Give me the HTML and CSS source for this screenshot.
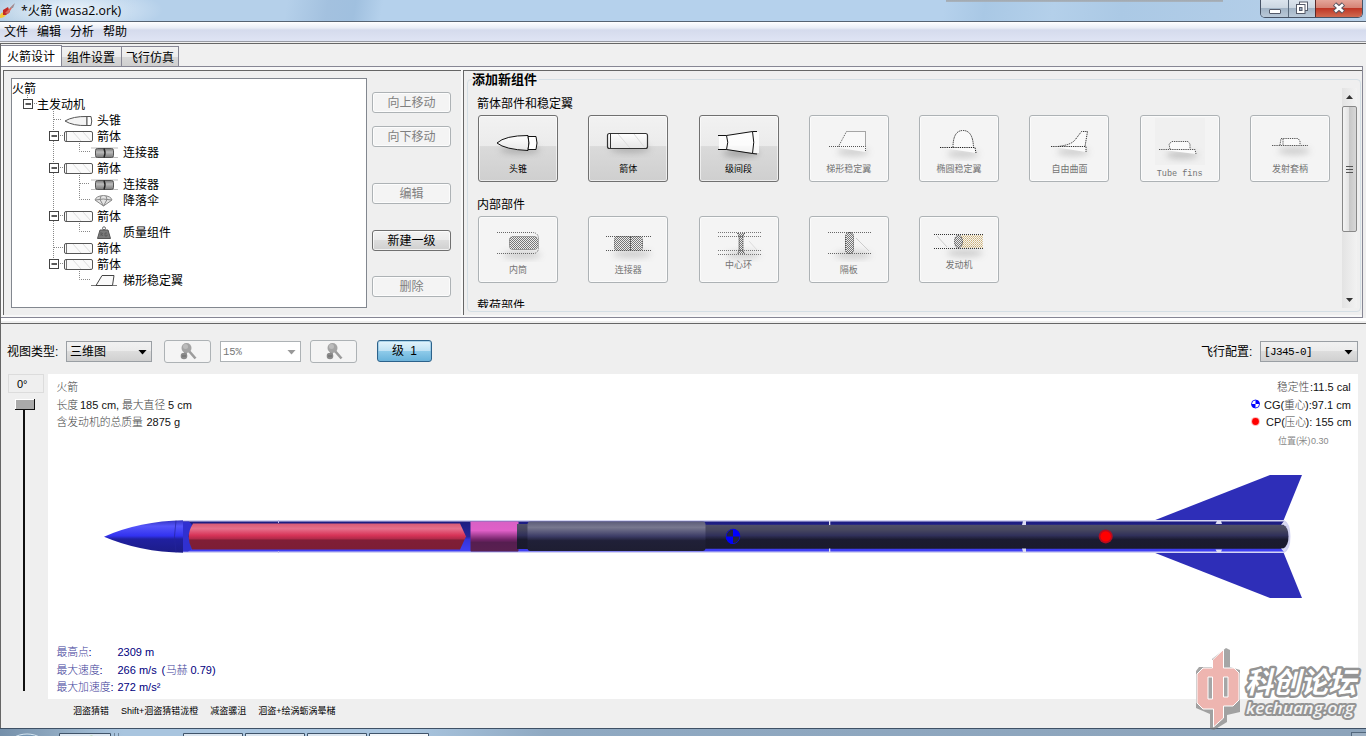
FILE: index.html
```html
<!DOCTYPE html>
<html lang="zh-CN">
<head>
<meta charset="utf-8">
<title>火箭 (wasa2.ork)</title>
<link rel="stylesheet" href="styles.css">
</head>
<body>
<svg width="0" height="0" class="defs">
  <defs>
    <linearGradient id="tubeFill" x1="0" y1="0" x2="0" y2="1"><stop offset="0" stop-color="#fff"/><stop offset="1" stop-color="#e6e6e6"/></linearGradient>
    <linearGradient id="coupFill" x1="0" y1="0" x2="0" y2="1"><stop offset="0" stop-color="#777"/><stop offset=".4" stop-color="#bbb"/><stop offset="1" stop-color="#777"/></linearGradient>
    <pattern id="check" width="2" height="2" patternUnits="userSpaceOnUse"><rect width="2" height="2" fill="#ececec"/><rect width="1" height="1" fill="#777"/><rect x="1" y="1" width="1" height="1" fill="#777"/></pattern>
    <pattern id="checkGold" width="2" height="2" patternUnits="userSpaceOnUse"><rect width="1" height="1" fill="#c09a50"/><rect x="1" y="1" width="1" height="1" fill="#d5b878"/></pattern>
    <filter id="soft" x="-30%" y="-60%" width="160%" height="220%"><feGaussianBlur stdDeviation="3"/></filter>
    <symbol id="t-nose" viewBox="0 0 30 16"><path d="M2 8Q10 3.2 24 3.5V12.500Q10 13 2 8Z" fill="#f4f4f4" stroke="#555"/><path d="M24 3.500H28Q29.500 8 28 12.500H24Z" fill="#fff" stroke="#555"/></symbol>
    <symbol id="t-tube" viewBox="0 0 30 16"><rect x="1.500" y="2.500" width="28" height="10" rx="1.500" fill="#fafafa" stroke="#555"/><path d="M3.500 3V12" stroke="#777"/><path d="M10 3L18 12M20 3L28 12" stroke="#ddd"/></symbol>
    <symbol id="t-coupler" viewBox="0 0 30 16"><path d="M2 3H29M2 12.500H29" stroke="#aaa" stroke-width=".8"/><rect x="6.500" y="3.500" width="18" height="9" rx="2" fill="url(#coupFill)" stroke="#555"/><path d="M15 3.500Q17 8 15 12.500" stroke="#222" fill="none" stroke-width="1.400"/></symbol>
    <symbol id="t-chute" viewBox="0 0 30 16"><path d="M6 7Q7 3 14.500 2.500Q22 3 23 7L14.500 13Z" fill="#e4e4e4" stroke="#888"/><path d="M6.500 7Q14 5 22.500 7M11 6.500L14.500 13L18 6.500M11 6.500L12 3M18 6.500L17 3" fill="none" stroke="#888"/></symbol>
    <symbol id="t-mass" viewBox="0 0 30 16"><circle cx="15" cy="3.300" r="1.500" fill="none" stroke="#666"/><path d="M11 5H19L21.500 13.500H8.500Z" fill="#7a7a7a" stroke="#555"/><path d="M12 7V11M12 9.500L14 8M12.500 9L14 11M18 8H16V11H18V9.500" fill="none" stroke="#555" stroke-width=".8"/></symbol>
    <symbol id="t-fin" viewBox="0 0 30 16"><path d="M2 12.500H28" stroke="#777"/><path d="M7 12.500L13 2.500H25L23.500 12.500Z" fill="#fafafa" stroke="#444"/></symbol>
    <symbol id="zoomer" viewBox="0 0 22 22"><path d="M12 10L18.500 17.500" stroke="#9c9c9c" stroke-width="2.600"/><circle cx="9.500" cy="7" r="5" fill="#a4a4a4"/><circle cx="8.500" cy="5.500" r="2.500" fill="#bcbcbc"/><path d="M7 11H10V14H7Z" fill="#a0a0a0"/><circle cx="7" cy="15" r="3.300" fill="#8a8a8a"/><path d="M5 15H9" stroke="#6c6c6c"/></symbol>
  </defs>
</svg>

<header class="titlebar">
  <svg class="appicon" width="17" height="20" viewBox="0 0 17 20"><path d="M0 18Q-1 13 4 12L6 15Q4 18 0 18Z" fill="#f3c93c"/><path d="M3 15L3 10L8 7L10 12L6 15Z" fill="#c22a25"/><path d="M5 13L14 4L12 8L8 14Z" fill="#d96a5e"/><path d="M10 8L15 3L13 8Z" fill="#9a8f96"/></svg>
  <h1 class="title">*火箭 (wasa2.ork)</h1>
  <div class="winbtns">
    <span class="wb wb-min"><svg width="14" height="14" viewBox="0 0 14 14"><rect x="1.500" y="4.500" width="11" height="4" rx=".5" fill="#fff" stroke="#555b6a"/></svg></span>
    <span class="wb wb-max"><svg width="14" height="14" viewBox="0 0 14 14"><rect x="4.500" y="1" width="8" height="8.500" fill="#fff" stroke="#555b6a"/><rect x="1.500" y="3.500" width="8.500" height="9" fill="#fff" stroke="#555b6a"/><rect x="4.500" y="6.500" width="2.500" height="3" fill="#9eb0c4" stroke="#555b6a"/></svg></span>
    <span class="wb wb-close"><svg width="14" height="14" viewBox="0 0 14 14"><path d="M2.500 3L11.500 11M11.500 3L2.500 11" stroke="#5a5560" stroke-width="4.800"/><path d="M3 3.500L11 10.500M11 3.500L3 10.500" stroke="#fff" stroke-width="2.600"/></svg></span>
  </div>
</header>
<nav class="menubar"><span>文件</span><span>编辑</span><span>分析</span><span>帮助</span></nav>

<main class="frame">
  <div class="tabs"><span class="tab tab-on">火箭设计</span><span class="tab">组件设置</span><span class="tab">飞行仿真</span></div>
  <div class="upper">
    <section class="pane pane-tree">
      <div class="tree">
        <svg class="lines" width="180" height="228" viewBox="12 79 180 228">
          <g fill="none" stroke="#888" stroke-dasharray="1 1">
            <path d="M27.500 95V99M34 103.500H37M53.500 111V263.500M54 119.500H62M60 135.500H63M60 167.500H63M60 215.500H63M54 247.500H63M60 263.500H63M79.500 143V151.500H90M79.500 175V199.500H90M80 183.500H90M79.500 223V231.500H90M79.500 271V279.500H90"/>
          </g>
          <g fill="#fff" stroke="#444"><rect x="23.500" y="99.500" width="9" height="9"/><rect x="49.500" y="131.500" width="9" height="9"/><rect x="49.500" y="163.500" width="9" height="9"/><rect x="49.500" y="211.500" width="9" height="9"/><rect x="49.500" y="259.500" width="9" height="9"/></g>
          <path d="M25.500 104H31M51.500 136H57M51.500 168H57M51.500 216H57M51.500 264H57" stroke="#222" stroke-width="1.600"/>
        </svg>
        <ul class="rows">
          <li>火箭</li>
          <li class="d1">主发动机</li>
          <li class="d2"><svg><use href="#t-nose"/></svg>头锥</li>
          <li class="d2"><svg><use href="#t-tube"/></svg>箭体</li>
          <li class="d3"><svg><use href="#t-coupler"/></svg>连接器</li>
          <li class="d2"><svg><use href="#t-tube"/></svg>箭体</li>
          <li class="d3"><svg><use href="#t-coupler"/></svg>连接器</li>
          <li class="d3"><svg><use href="#t-chute"/></svg>降落伞</li>
          <li class="d2"><svg><use href="#t-tube"/></svg>箭体</li>
          <li class="d3"><svg><use href="#t-mass"/></svg>质量组件</li>
          <li class="d2"><svg><use href="#t-tube"/></svg>箭体</li>
          <li class="d2"><svg><use href="#t-tube"/></svg>箭体</li>
          <li class="d3"><svg><use href="#t-fin"/></svg>梯形稳定翼</li>
        </ul>
      </div>
      <div class="actions">
        <button class="btn off">向上移动</button>
        <button class="btn off">向下移动</button>
        <button class="btn off gap-l">编辑</button>
        <button class="btn gap-m">新建一级</button>
        <button class="btn off gap-n">删除</button>
      </div>
    </section>

    <section class="pane pane-add">
      <fieldset class="group">
        <legend>添加新组件</legend>
        <div class="scroller">
          <div class="catalog">
            <h2>箭体部件和稳定翼</h2>
            <div class="cards">
              <button class="card"><svg viewBox="0 0 80 46"><ellipse cx="42" cy="35" rx="20" ry="4" fill="#888" opacity=".5" filter="url(#soft)"/><path d="M19 28Q27 20.500 50 20.500Q52 27 50 35.500Q27 34.500 19 28Z" fill="url(#tubeFill)" stroke="#111"/><path d="M50 21.500H58Q60 28 58 34.500H50Q52 28 50 21.500Z" fill="#fff" stroke="#111"/></svg><span>头锥</span></button>
              <button class="card"><svg viewBox="0 0 80 46"><ellipse cx="42" cy="34" rx="20" ry="4" fill="#888" opacity=".5" filter="url(#soft)"/><rect x="19.500" y="18.500" width="40" height="15" rx="2" fill="url(#tubeFill)" stroke="#333" stroke-width="1.200"/><path d="M22.500 19V33" stroke="#333"/><path d="M30 19L42 33M46 19L57 33" stroke="#ddd"/></svg><span>箭体</span></button>
              <button class="card"><svg viewBox="0 0 80 46"><ellipse cx="42" cy="38" rx="18" ry="4" fill="#777" opacity=".55" filter="url(#soft)"/><path d="M20 20.500H27.500L53.500 16.500L60 17V38L53.500 38L27.500 34.500H20Z" fill="#fff" opacity=".85"/><path d="M19 20.500H27.500L53.500 16.500H58M58 39L53.500 38.500L27.500 34.500H19M27.500 20.500Q30 27 27.500 34.500M53.500 16.500Q56 27 53.500 38.500" fill="none" stroke="#111"/></svg><span>级间段</span></button>
              <button class="card off"><svg viewBox="0 0 80 46"><ellipse cx="44" cy="37" rx="16" ry="4" fill="#999" opacity=".4" filter="url(#soft)"/><g fill="#f8f8f8" stroke="#555" stroke-dasharray="1 1"><path d="M29.500 31.500L37.500 16.500H56.500V31.500M20 31.500H56.500V37"/></g></svg><span>梯形稳定翼</span></button>
              <button class="card off"><svg viewBox="0 0 80 46"><ellipse cx="44" cy="39" rx="16" ry="4" fill="#999" opacity=".4" filter="url(#soft)"/><g fill="#fafafa" stroke="#222" stroke-dasharray="1.300 .9"><path d="M34 32.500Q34 15.500 44 15.500Q54 15.500 54.500 32.500M21 32.500H56L57 38"/></g></svg><span>椭圆稳定翼</span></button>
              <button class="card off"><svg viewBox="0 0 80 46"><ellipse cx="44" cy="37" rx="16" ry="4" fill="#999" opacity=".4" filter="url(#soft)"/><g fill="#fafafa" stroke="#333" stroke-dasharray="1.300 .9"><path d="M29 31.500Q42 30 46 25L52.500 16.500H58.500L56 31.500M22 31.500H57V37"/></g></svg><span>自由曲面</span></button>
              <button class="card off low"><svg viewBox="0 0 80 50"><rect x="15" y="3" width="50" height="47" fill="#f0f0f0"/><ellipse cx="42" cy="40" rx="16" ry="4" fill="#999" opacity=".5" filter="url(#soft)"/><g fill="#fafafa" stroke="#555" stroke-dasharray="1.300 .9"><path d="M30 34L29 29L32 26.500H48L50 29V34M19 34.500H55L56 39"/></g></svg><span class="mono">Tube fins</span></button>
              <button class="card off"><svg viewBox="0 0 80 46"><ellipse cx="44" cy="36" rx="16" ry="4" fill="#999" opacity=".4" filter="url(#soft)"/><g fill="#fafafa" stroke="#555" stroke-dasharray="1.300 .9"><path d="M30 30L31 23.500H48L50 26V30M33 24V30M22 30.500H58"/></g></svg><span>发射套柄</span></button>
            </div>
            <h2>内部部件</h2>
            <div class="cards">
              <button class="card off"><svg viewBox="0 0 80 46"><ellipse cx="44" cy="39" rx="19" ry="4" fill="#999" opacity=".4" filter="url(#soft)"/><rect x="31.500" y="20.500" width="28" height="13" rx="3" fill="url(#check)"/><g fill="none" stroke="#666" stroke-dasharray="1 1"><path d="M19 16.500H55Q60 17 60.500 22V32Q60 37 56 37.500H19"/><rect x="31.500" y="20.500" width="28" height="13" rx="3"/></g></svg><span>内筒</span></button>
              <button class="card off"><svg viewBox="0 0 80 46"><ellipse cx="44" cy="38" rx="19" ry="4" fill="#999" opacity=".4" filter="url(#soft)"/><rect x="26.500" y="20.500" width="28" height="14" rx="3" fill="url(#check)"/><g fill="none" stroke="#555" stroke-dasharray="1 1"><path d="M18 20.500H64M18 34.500H64M42.500 21V34"/><rect x="26.500" y="20.500" width="28" height="14" rx="3"/></g></svg><span>连接器</span></button>
              <button class="card off high"><svg viewBox="0 0 80 46"><ellipse cx="44" cy="39" rx="17" ry="4" fill="#999" opacity=".35" filter="url(#soft)"/><path d="M38 17H46L44 20V35L46 38H38L40 35V20Z" fill="url(#check)"/><g fill="none" stroke="#777" stroke-dasharray="1 1"><path d="M19 16.500H62M19 20.500H62M19 34.500H62M19 38.500H62"/><path d="M38.500 17L40 20V35L38.500 38M45.500 17L44 20V35L45.500 38" stroke="#333"/></g><path d="M50 25L58 34" stroke="#ddd"/></svg><span>中心环</span></button>
              <button class="card off"><svg viewBox="0 0 80 46"><ellipse cx="44" cy="39" rx="18" ry="4" fill="#999" opacity=".4" filter="url(#soft)"/><rect x="36.500" y="16.500" width="8" height="21" rx="3.500" fill="url(#check)" stroke="#444" stroke-dasharray="1 1"/><path d="M19 16.500H62M19 37.500H62" stroke="#666" stroke-dasharray="1 1"/><path d="M47 22L60 35" stroke="#ccc"/></svg><span>隔板</span></button>
              <button class="card off high"><svg viewBox="0 0 80 46"><ellipse cx="46" cy="37" rx="18" ry="4" fill="#999" opacity=".4" filter="url(#soft)"/><rect x="42" y="19" width="22" height="13" fill="url(#checkGold)" opacity=".75"/><ellipse cx="39.500" cy="25.500" rx="4" ry="6.500" fill="url(#check)" stroke="#333" stroke-dasharray="1 1"/><path d="M15 18.500H64M15 32.500H64" stroke="#333" stroke-dasharray="1 1"/><path d="M18 20L28 31" stroke="#ccc"/></svg><span>发动机</span></button>
            </div>
            <h2>载荷部件</h2>
          </div>
          <div class="scrollbar"><i class="arrow up"></i><i class="thumb"></i><i class="arrow down"></i></div>
        </div>
      </fieldset>
    </section>
  </div>

  <section class="lower">
    <div class="toolbar">
      <label class="lbl1">视图类型:</label>
      <span class="select s1"><b>三维图</b><i></i></span>
      <button class="tool"><svg width="22" height="22"><use href="#zoomer"/></svg></button>
      <span class="select s2"><b>15%</b><i></i></span>
      <button class="tool"><svg width="22" height="22"><use href="#zoomer"/></svg></button>
      <button class="stage">级 1</button>
      <label class="lbl2">飞行配置:</label>
      <span class="select s3"><b>[J345-0]</b><i></i></span>
    </div>
    <div class="work">
      <div class="roll"><span class="deg">0°</span><i class="knob"></i><i class="rail"></i></div>
      <svg class="view" width="1310" height="325" viewBox="48 374 1310 325">
        <defs>
          <linearGradient id="gNose" x1="0" y1="0" x2="0" y2="1"><stop offset="0" stop-color="#3434c0"/><stop offset=".18" stop-color="#5555fa"/><stop offset=".48" stop-color="#3232f0"/><stop offset=".58" stop-color="#2020a0"/><stop offset="1" stop-color="#1c1c88"/></linearGradient>
          <linearGradient id="gRed" x1="0" y1="0" x2="0" y2="1"><stop offset="0" stop-color="#d85a74"/><stop offset=".2" stop-color="#e6708c"/><stop offset=".45" stop-color="#d83458"/><stop offset=".58" stop-color="#b42a4a"/><stop offset=".64" stop-color="#801e36"/><stop offset="1" stop-color="#7c1e34"/></linearGradient>
          <linearGradient id="gPink" x1="0" y1="0" x2="0" y2="1"><stop offset="0" stop-color="#d860c4"/><stop offset=".3" stop-color="#e060c8"/><stop offset=".6" stop-color="#74246a"/><stop offset=".7" stop-color="#561e50"/><stop offset="1" stop-color="#5a2050"/></linearGradient>
          <linearGradient id="gGray" x1="0" y1="0" x2="0" y2="1"><stop offset="0" stop-color="#5c5c78"/><stop offset=".2" stop-color="#78788f"/><stop offset=".5" stop-color="#3c3c66"/><stop offset=".65" stop-color="#202038"/><stop offset="1" stop-color="#1e1e32"/></linearGradient>
          <linearGradient id="gDark" x1="0" y1="0" x2="0" y2="1"><stop offset="0" stop-color="#505068"/><stop offset=".2" stop-color="#48485f"/><stop offset=".45" stop-color="#30305a"/><stop offset=".62" stop-color="#1b1b30"/><stop offset="1" stop-color="#1a1a2c"/></linearGradient>
          <linearGradient id="gBack" x1="0" y1="0" x2="0" y2="1"><stop offset="0" stop-color="#1d1d80"/><stop offset=".5" stop-color="#26269a"/><stop offset=".6" stop-color="#3434d8"/><stop offset="1" stop-color="#4040f4"/></linearGradient>
        </defs>
        <rect x="48" y="374" width="1310" height="325" fill="#fff"/>
        <g fill="#2e2eb8"><path d="M1154 520.500L1270 475H1302L1283.500 520.500Z"/><path d="M1154 552.500L1270 598H1302L1283.500 552.500Z"/></g>
        <path d="M183 520H1284Q1290.500 523 1290.500 536.500T1284 553H183Z" fill="#d4d4f2"/>
        <rect x="183" y="521.500" width="1101" height="30" fill="url(#gBack)"/>
        <path d="M104 536.700Q140 521 183 520.300V552.700Q140 552 104 536.700Z" fill="url(#gNose)"/>
        <path d="M176 520.600Q173 536 176 552.400" fill="none" stroke="#24249c" stroke-width=".7"/>
        <path d="M183 521.500H189L192 525L188 536.500L192 549L188 551.500H183Z" fill="#3030d0"/>
        <path d="M193 523.500H460L466 536.500L460 549.500H192Q185 536 193 523.500Z" fill="url(#gRed)"/>
        <path d="M278.500 520V523M278.500 551V553" stroke="#b8b8e8"/>
        <rect x="470.500" y="521.500" width="48" height="30" rx=".8" fill="url(#gPink)"/>
        <rect x="517" y="524" width="13" height="25" fill="url(#gDark)"/>
        <path d="M704 524.700H1283Q1288.500 527 1288.500 536.500T1283 548.700H704Z" fill="url(#gDark)"/>
        <rect x="527.500" y="521.500" width="178" height="29.500" rx="3" fill="url(#gGray)"/>
        <g fill="#dcdcf2"><path d="M829 521H830.300V525H829ZM829 548.500H830.300V552H829ZM1023 521H1026V525H1022ZM1022 548.500H1026V552H1023ZM1217 521H1221L1222 524H1215.500ZM1215.500 549.500H1222L1221 552H1217ZM1281 524.700L1284 521L1287 525ZM1281 548.500L1284 552L1287 548Z"/></g>
        <g><ellipse cx="733" cy="536.400" rx="6.800" ry="7.200" fill="#22223e" stroke="#1010c8"/><path d="M733 536.400V529A7 7 0 0 1 740 536.400ZM733 536.400V544A7 7 0 0 1 726 536.400Z" fill="#00f"/></g>
        <circle cx="1105.700" cy="536.400" r="7" fill="#b50d20"/><circle cx="1105.700" cy="536.400" r="5.200" fill="#f00"/>
        <g class="info">
          <text y="391"><tspan class="cj" x="56.500">火箭</tspan></text>
          <text y="409"><tspan class="cj" x="56.500">长度</tspan><tspan x="80">185 cm,</tspan><tspan class="cj" x="122">最大直径</tspan><tspan x="168">5 cm</tspan></text>
          <text y="426"><tspan class="cj" x="56.500">含发动机的总质量</tspan><tspan x="146.500">2875 g</tspan></text>
          <text y="391"><tspan class="cj" x="1277">稳定性</tspan><tspan x="1310">:11.5 cal</tspan></text>
          <text y="409"><tspan x="1264">CG(</tspan><tspan class="cj" x="1284">重心</tspan><tspan x="1305">):97.1 cm</tspan></text>
          <text y="426"><tspan x="1266">CP(</tspan><tspan class="cj" x="1284.500">压心</tspan><tspan x="1305.500">): 155 cm</tspan></text>
          <text y="444" class="tiny"><tspan x="1278">位置(</tspan><tspan x="1298.500">米)</tspan><tspan x="1311">0.30</tspan></text>
        </g>
        <g><circle cx="1255.500" cy="404" r="4" fill="#fff" stroke="#22f"/><path d="M1255.500 404V400A4 4 0 0 1 1259.500 404ZM1255.500 404V408A4 4 0 0 1 1251.500 404Z" fill="#00f"/><circle cx="1255.500" cy="421.500" r="4.500" fill="#fbb"/><circle cx="1255.500" cy="421.500" r="3.400" fill="#f00"/></g>
        <g class="info blue">
          <text y="656"><tspan class="cj" x="56.500">最高点</tspan><tspan x="88.500">:</tspan><tspan x="117.500">2309 m</tspan></text>
          <text y="674"><tspan class="cj" x="56.500">最大速度</tspan><tspan x="99.500">:</tspan><tspan x="117.500">266 m/s</tspan><tspan x="161.500">(</tspan><tspan class="cj" x="166">马赫</tspan><tspan x="190.500">0.79)</tspan></text>
          <text y="691"><tspan class="cj" x="56.500">最大加速度</tspan><tspan x="110.500">:</tspan><tspan x="117.500">272 m/s²</tspan></text>
        </g>
      </svg>
    </div>
    <div class="hints"><span>洄盗猜错</span><span>Shift+洄盗猜错泷橙</span><span>减盗骡沮</span><span>洄盗+绘涡蛎涡晕槠</span></div>
  </section>
</main>

<footer class="taskbar">
  <svg width="1366" height="8" viewBox="0 728 1366 8">
    <ellipse cx="27" cy="744" rx="20" ry="14" fill="#7596b4" stroke="#d7e7f2"/>
    <g fill="#dbe5ef" stroke="#40546a"><path d="M59.500 740V729.500H110.500V740M183.500 740V729.500H242.500V740M245.500 740V729.500H304.500V740M307.500 740V729.500H366.500V740"/><path d="M369.500 740V729.500H428.500V740" fill="#f4f7fa"/></g>
    <path d="M114.500 729V736M118.500 729V736" stroke="#70869c"/>
    <path d="M76 737Q83 731 90 736M86 735Q92 730 97 736" fill="none" stroke="#79c142" stroke-width="2"/>
    <ellipse cx="151" cy="738" rx="9" ry="4" fill="#dc5a48"/>
    <path d="M203 736Q209 731 217 736Z" fill="#f38b22"/><path d="M215 734H220L223 736" stroke="#d63ce0" stroke-width="3" fill="none"/>
    <rect x="261" y="734" width="28" height="3" fill="#3a66b8"/><rect x="323" y="735" width="15" height="2" fill="#c8ac5c"/>
    <path d="M394 736L396 732L398 736Z" fill="#d88"/>
    <text x="1299" y="744" font-family="Open Sans" font-size="12" fill="#fff">14:55</text>
    <rect x="1351.500" y="728.500" width="15" height="9" fill="#9db0c3" stroke="#53687d"/>
  </svg>
</footer>

<svg class="watermark" width="172" height="90" viewBox="1194 646 172 90">
  <path d="M1199 667H1212V659L1226 648L1230 650V667L1240 670V712L1227 715V722L1214 730L1210 729V714L1196 708V671Z" fill="#777" opacity=".65"/>
  <path fill-rule="evenodd" d="M1203 668H1212.500V660L1223.500 649.500V668H1234L1239 673V700L1233 706H1223.500V718L1213.500 727V709H1203L1197 703V674ZM1208 677V699H1212.500V677ZM1223.500 677V697H1228V677Z" fill="#eeb5b0" stroke="#fff"/>
  <g stroke-linejoin="round" paint-order="stroke">
    <text class="wm-cn" x="1245" y="693" textLength="111" lengthAdjust="spacingAndGlyphs">科创论坛</text>
    <text class="wm-en" x="1246" y="714" textLength="108" lengthAdjust="spacingAndGlyphs">kechuang.org</text>
  </g>
</svg>
</body>
</html>
```
FILE: styles.css
```css
* { box-sizing: border-box; }
body {
  margin: 0;
  width: 1366px;
  height: 736px;
  overflow: hidden;
  position: relative;
  display: flex;
  flex-direction: column;
  background: #efefef;
  color: #000;
  font: 12px/16px "Liberation Sans", "Noto Sans CJK SC", sans-serif;
}
.defs { position: absolute; }
button { font: inherit; padding: 0; margin: 0; color: inherit; }
h1, h2 { margin: 0; font: inherit; }

/* window chrome */
.titlebar {
  height: 22px;
  flex: none;
  display: flex;
  border-bottom: 1px solid #566372;
  background:
    linear-gradient(#a2a9b0, #a9b4bf) 946px 0 / 277px 2px no-repeat,
    radial-gradient(ellipse 95px 24px at 68px 10px, rgba(240,247,253,.95), rgba(240,247,253,0)),
    linear-gradient(100deg, #a9c6df 0, #b5d0ea 10%, #b5d0ea 21%, #a3c1df 24%, #a0c0df 26%, #b5d1ec 28%, #b5d1ec 69%, #a9c8e5 72%, #b4d0ea 77%, #abc9e5 82%, #b8d1ea 100%);
}
.appicon { margin-right: 4px; }
.title { font: 12.3px/22px "Open Sans", "Noto Sans CJK SC", sans-serif; flex: 1; }
.winbtns {
  display: flex;
  height: 18px;
  margin-right: 3px;
  border: 1px solid #475366;
  border-top: 0;
  border-radius: 0 0 5px 5px;
  overflow: hidden;
}
.wb { display: flex; justify-content: center; align-items: center; background: linear-gradient(#dbe4ed, #ccd7e2 45%, #a2b4c6 50%, #bac9d8); }
.wb-min { width: 28px; border-right: 1px solid #5a6a7c; padding-top: 6px; }
.wb-max { width: 27px; border-right: 1px solid #5a2a2a; padding-bottom: 2px; }
.wb-close { width: 46px; padding-bottom: 2px; background: linear-gradient(#e4a69a, #d68476 45%, #bf3726 50%, #d06a50); }
.menubar {
  height: 20px;
  flex: none;
  display: flex;
  gap: 9px;
  padding: 1px 4px 0;
  line-height: 19px;
  background: linear-gradient(#fff, #e9edf6 6px, #d5dbed 8px, #dfe4f4);
  border-bottom: 1px solid #9a9da6;
}

/* tabs and panes */
.frame { flex: 1; min-height: 0; margin-top: 1px; border-top: 1px solid #666; border-left: 1px solid #666; display: flex; flex-direction: column; }
.tabs { height: 22px; flex: none; display: flex; align-items: flex-end; background: #f0f0f0; }
.tab {
  height: 20px;
  width: 57px;
  border: 1px solid #868694;
  border-left: 0;
  border-bottom: 0;
  padding-left: 4px;
  line-height: 23px;
  background: linear-gradient(#f2f2f2, #ececec 50%, #d8d8d8 51%, #cfcfcf);
  white-space: nowrap;
}
.tab:nth-child(2) { width: 60px; padding-left: 5px; }
.tab-on { width: 61px; height: 21px; padding-left: 6px; background: #fff; line-height: 22px; }
.upper {
  height: 252px;
  flex: none;
  display: flex;
  gap: 2px;
  padding: 3px 0 2px 2px;
  background: #f8f8f8;
  border: solid #868694;
  border-width: 1px 1px 1px 0;
  margin-right: 3px;
}
.pane { border: solid #666; border-width: 1px 0 0 1px; background: #efefef; height: 245px; }
.pane-tree { width: 458px; display: flex; padding: 7px 8px 0 7px; gap: 5px; }
.tree { width: 356px; height: 230px; border: 1px solid #82878f; background: #fff; display: grid; align-content: start; }
.lines, .rows { grid-area: 1 / 1; }
.rows { list-style: none; margin: 0; padding: 2px 0 0; }
.rows li { height: 16px; display: flex; align-items: center; white-space: nowrap; }
.rows svg { width: 30px; height: 16px; margin: 0 4px 1px 0; }
.d1 { padding-left: 25px; }
.d2 { padding-left: 51px; }
.d3 { padding-left: 77px; }
.actions { width: 79px; padding-top: 14px; display: flex; flex-direction: column; gap: 13px; }
.btn {
  height: 21px;
  border: 1px solid #707070;
  border-radius: 3px;
  background: linear-gradient(#f3f3f3, #ebebeb 48%, #dddddd 50%, #cfcfcf);
  line-height: 20px;
  box-shadow: inset 0 0 0 1px rgba(255,255,255,.7);
}
.btn.off { color: #808080; border-color: #adb2b5; background: #f4f4f4; }
.gap-l { margin-top: 23px; }
.gap-m { margin-top: 13px; }
.gap-n { margin-top: 12px; }

/* component catalogue */
.pane-add { flex: 1; min-width: 0; padding: 0 1px 1px 3px; }
.group { margin: 0; min-width: 0; height: 241px; border: 1px solid #d5dfe5; border-radius: 4px; padding: 0 3px 0 10px; }
.group legend { margin-left: -6px; padding: 0 2px 0 0; height: 16px; font-weight: bold; font-size: 13px; line-height: 17px; }
.scroller { display: flex; height: 220px; margin-top: 1px; }
.catalog { flex: 1; overflow: hidden; padding-top: 8px; margin-left: -1px; }
.catalog h2 { height: 16px; line-height: 16px; }
.cards { display: grid; grid-template-columns: repeat(8, 80px); column-gap: 30.29px; margin: 3px 0 15px 1px; }
.card {
  height: 67px;
  display: flex;
  flex-direction: column;
  align-items: center;
  border: 1px solid #707070;
  border-radius: 3px;
  background: linear-gradient(#f2f2f2, #ebebeb 46%, #dadada 47%, #cfcfcf);
  box-shadow: inset 0 0 0 1px rgba(255,255,255,.6);
  font-size: 9px;
  line-height: 12px;
}
.card svg { width: 80px; height: 46px; margin: -1px -1px 2px; flex: none; }
.card.off { border-color: #adb2b5; background: #f4f4f4; color: #737373; }
.card.low svg { height: 50px; margin-bottom: 3px; }
.card.high svg { margin-bottom: -3px; }
.mono { font-family: "Liberation Mono", monospace; font-size: 8.5px; }
.scrollbar { width: 15px; display: flex; flex-direction: column; align-items: center; background: linear-gradient(90deg, #e3e3e3, #f2f2f2); }
.arrow { height: 18px; width: 7px; background: #333; flex: none; }
.up { clip-path: polygon(50% 7px, 100% 11px, 0 11px); }
.down { clip-path: polygon(0 8px, 100% 8px, 50% 12px); margin-top: auto; }
.thumb { width: 15px; height: 126px; border: 1px solid #888; border-radius: 2px; background: repeating-linear-gradient(#555 0 1px, transparent 1px 3px) 3px 59px / 7px 8px no-repeat, linear-gradient(90deg, #f4f4f4, #e2e2e2 48%, #c8c8c8 50%, #d8d8d8); }

/* rocket view */
.lower { flex: 1; min-height: 0; margin-top: 5px; border-top: 1px solid #666; box-shadow: 0 -2px #efefef, 0 -5px #fff; display: flex; flex-direction: column; }
.toolbar { height: 50px; flex: none; display: flex; align-items: center; padding: 4px 8px 0 6px; }
.toolbar label { padding-top: 1px; }
.lbl1 { width: 59px; }
.select {
  height: 21px;
  display: flex;
  align-items: center;
  justify-content: space-between;
  border: 1px solid #9a9fa4;
  padding: 0 4px 0 3px;
  background: linear-gradient(#f1f1f1, #ebebeb 48%, #dddddd 50%, #d0d0d0);
}
.select b { font-weight: normal; padding-top: 1px; }
.select i { width: 9px; height: 5px; margin-top: 2px; background: #000; clip-path: polygon(0 0, 100% 0, 50% 100%); }
.s1 { width: 86px; }
.s2 { width: 81px; margin: 0 9px; background: #fff; color: #777; border-color: #adb2b5; font: 10.5px/16px "Liberation Mono", monospace; padding-left: 2px; }
.s2 i { background: #999; }
.s3 { width: 98px; font: 11px/16px "Liberation Mono", monospace; letter-spacing: -.6px; }
.tool { width: 47px; height: 23px; border: 1px solid #adb2b5; border-radius: 3px; background: #f4f4f4; display: flex; justify-content: center; }
.s1 + .tool { margin-left: 12px; }
.stage { width: 55px; height: 22px; margin-left: 20px; border: 1px solid #2c628b; border-radius: 3px; background: linear-gradient(#e3f3fb, #c0e2f4 48%, #8fcbea 50%, #68b3db); line-height: 20px; word-spacing: 3px; box-shadow: inset 0 0 0 1px rgba(120,180,215,.5); }
.lbl2 { margin-left: auto; width: 59px; }
.work { display: flex; height: 325px; flex: none; }
.roll { width: 47px; padding-left: 7px; display: flex; flex-direction: column; }
.deg { width: 36px; height: 19px; border: 1px solid #dcdcdc; padding-left: 8px; line-height: 18px; font-size: 11px; }
.knob { width: 20px; height: 11px; margin: 6px 0 0 7px; background: #aaa; border: solid #111; border-width: 0 1px 1px 0; box-shadow: inset 1px 1px #fff; }
.rail { width: 2px; height: 281px; margin-left: 15px; background: #111; }
.view { display: block; flex: none; }
.info { font: 11px "Liberation Sans", sans-serif; fill: #111; }
.cj { font-family: "Noto Sans CJK SC", sans-serif; font-weight: 300; fill: #444; font-size: 10.8px; }
.tiny { font-family: "Liberation Sans", "Noto Sans CJK SC", sans-serif; font-size: 9px; fill: #888; }
.blue { fill: #000080; }
.blue .cj { fill: #3c3c98; }
.hints { display: flex; gap: 12px; padding: 5px 0 0 72px; font-size: 9px; line-height: 14px; white-space: nowrap; }
.taskbar { height: 8px; flex: none; background: linear-gradient(90deg, #7590aa 0, #8ea8c0 4%, #a9c5df 9%, #a9c5df 30%, #8fa9c2 40%, #8da4bb 100%); box-shadow: inset 0 1px #3f5166; }

.watermark { position: absolute; left: 1194px; top: 646px; }
.wm-cn { font: italic bold 29px "Noto Sans CJK SC", sans-serif; fill: #fff; stroke: #949494; stroke-width: 5px; }
.wm-en { font: italic 600 17px "Open Sans", sans-serif; fill: #f4f4f4; stroke: #949494; stroke-width: 4px; }
```
